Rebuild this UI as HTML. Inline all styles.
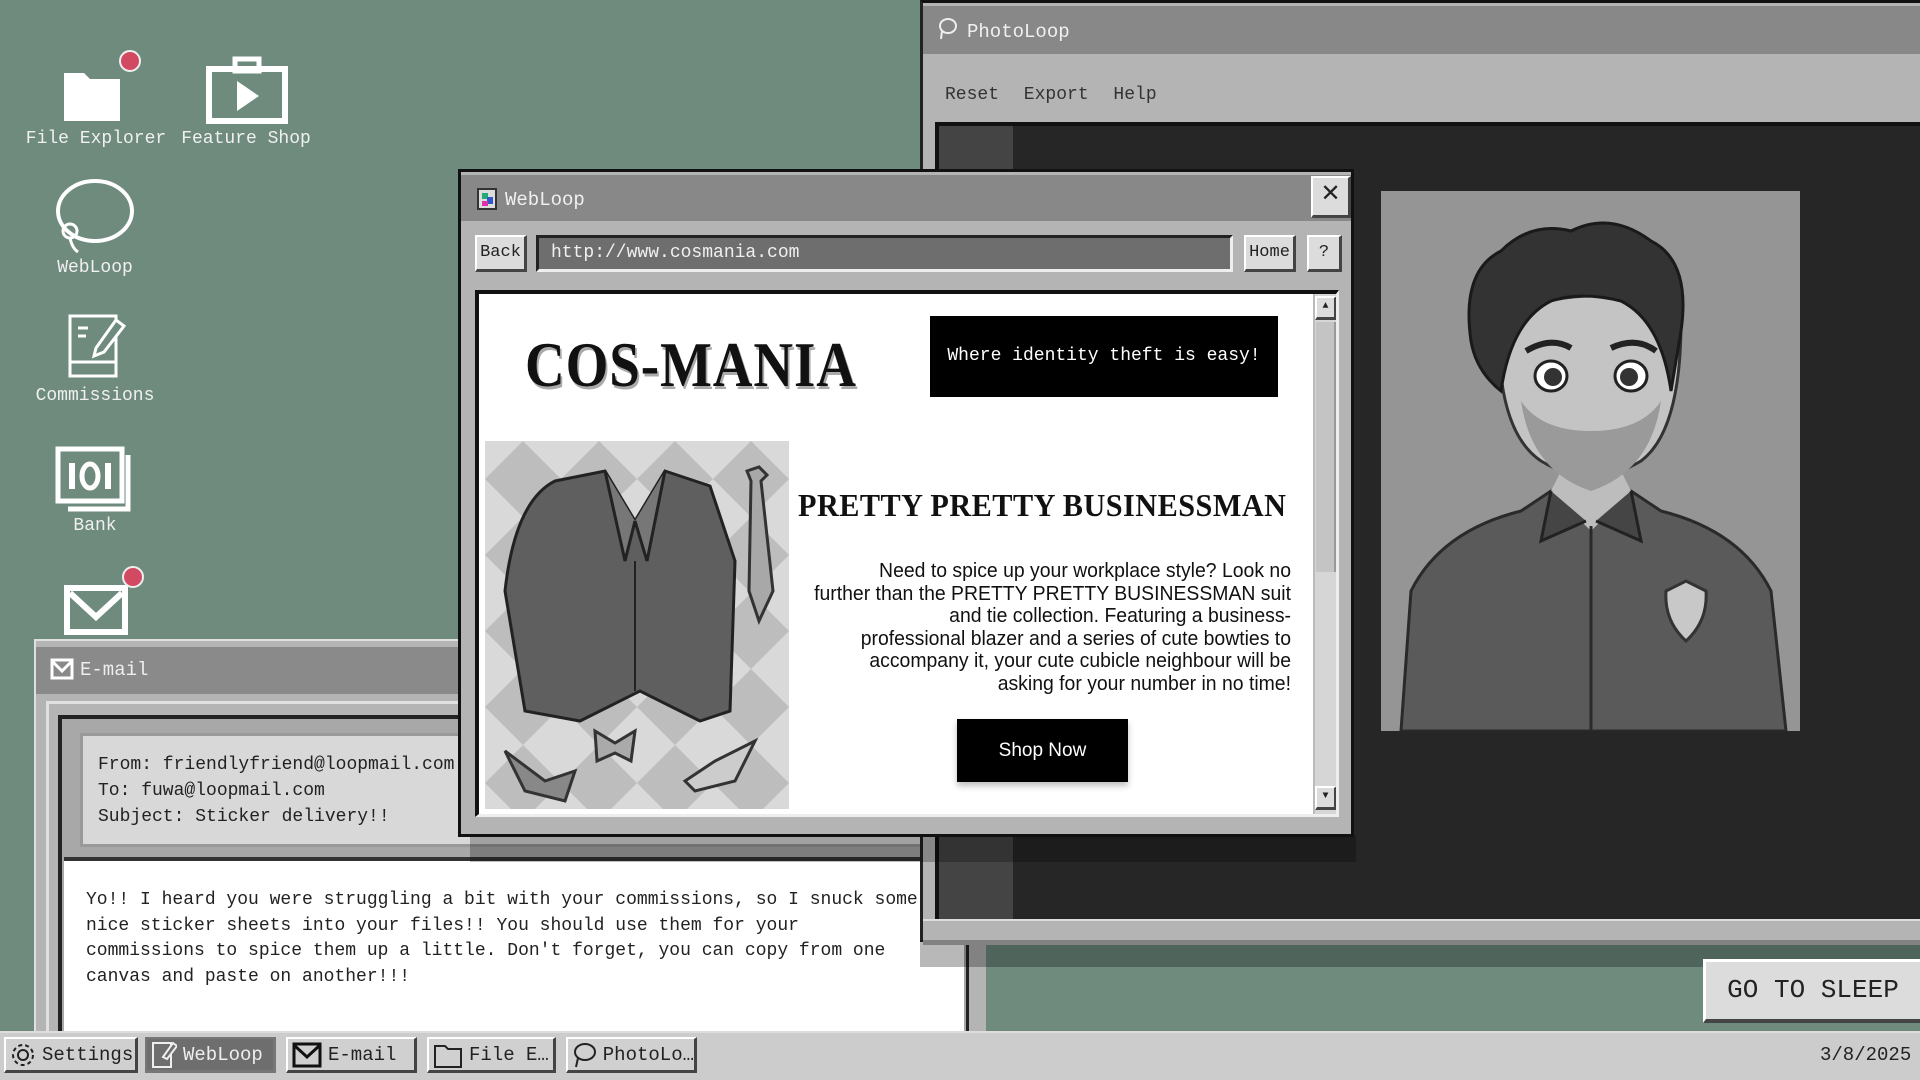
<!DOCTYPE html>
<html><head><meta charset="utf-8"><style>
*{margin:0;padding:0;box-sizing:border-box}
body{width:1920px;height:1080px;overflow:hidden;background:#6e8b7e;position:relative;font-family:"Liberation Mono",monospace;}
.a{position:absolute}
.lbl{position:absolute;color:#f0f0f0;font-size:18px;text-align:center;width:170px;}
.btn{position:absolute;background:#dcdcdc;border-top:2px solid #fff;border-left:2px solid #fff;border-right:3px solid #444;border-bottom:3px solid #444;font-size:17px;color:#222;text-align:center}
.tb{position:absolute;top:1037px;height:36px;background:#d0d0d0;border-top:2px solid #fff;border-left:2px solid #fff;border-right:3px solid #444;border-bottom:3px solid #444;font-size:19px;color:#222;display:flex;align-items:center;gap:6px;padding-left:4px}
.dot{position:absolute;width:22px;height:22px;border-radius:50%;background:#d24a62;border:2px solid #eee}
</style></head><body>

<!-- desktop icons -->
<svg class="a" style="left:60px;top:55px" width="90" height="70"><path d="M4 18 h20 l6 6 h30 v42 h-56z" fill="#fff"/></svg>
<div class="dot" style="left:119px;top:50px"></div>
<div class="lbl" style="left:11px;top:129px">File Explorer</div>
<svg class="a" style="left:205px;top:55px" width="85" height="70"><rect x="4" y="14" width="76" height="52" fill="none" stroke="#fff" stroke-width="6"/><rect x="30" y="4" width="24" height="12" fill="none" stroke="#fff" stroke-width="5"/><path d="M32 26 v30 l22 -15z" fill="#fff"/></svg>
<div class="lbl" style="left:161px;top:129px">Feature Shop</div>
<svg class="a" style="left:52px;top:175px" width="90" height="80"><ellipse cx="43" cy="36" rx="37" ry="30" fill="none" stroke="#fff" stroke-width="4"/><circle cx="18" cy="56" r="7" fill="none" stroke="#fff" stroke-width="3"/><path d="M18 63 q2 10 8 14" stroke="#fff" stroke-width="3" fill="none"/></svg>
<div class="lbl" style="left:10px;top:258px">WebLoop</div>
<svg class="a" style="left:66px;top:312px" width="60" height="70"><rect x="4" y="4" width="46" height="60" fill="none" stroke="#fff" stroke-width="3"/><path d="M4 50 h46" stroke="#fff" stroke-width="3"/><path d="M12 16 h10 M12 24 h8" stroke="#fff" stroke-width="3"/><path d="M30 36 l20 -28 l8 6 l-20 26 l-10 4z" fill="#6e8b7e" stroke="#fff" stroke-width="3"/></svg>
<div class="lbl" style="left:10px;top:386px">Commissions</div>
<svg class="a" style="left:54px;top:445px" width="85" height="70"><rect x="4" y="4" width="64" height="52" fill="none" stroke="#fff" stroke-width="5"/><path d="M74 10 v54 h-60" fill="none" stroke="#fff" stroke-width="5"/><rect x="15" y="18" width="6" height="26" fill="#fff"/><rect x="51" y="18" width="6" height="26" fill="#fff"/><ellipse cx="36" cy="31" rx="8" ry="12" fill="none" stroke="#fff" stroke-width="5"/></svg>
<div class="lbl" style="left:10px;top:516px">Bank</div>
<svg class="a" style="left:64px;top:585px" width="70" height="50"><rect x="3" y="3" width="58" height="44" fill="none" stroke="#fff" stroke-width="6"/><path d="M6 8 l26 24 l26 -24" fill="none" stroke="#fff" stroke-width="6"/></svg>
<div class="dot" style="left:122px;top:566px"></div>

<!-- Email window -->
<div class="a" style="left:34px;top:639px;width:952px;height:400px;background:#b4b4b4;border:2px solid #e0e0e0">
 <div class="a" style="left:0;top:6px;width:948px;height:47px;background:#8a8a8a"></div>
 <svg class="a" style="left:14px;top:17px" width="26" height="24"><rect x="2" y="2" width="20" height="18" fill="none" stroke="#fff" stroke-width="3"/><path d="M3 4 l9 9 l9 -9" stroke="#fff" stroke-width="3" fill="none"/></svg>
 <div class="a" style="left:44px;top:18px;color:#eee;font-size:19px">E-mail</div>
 <div class="a" style="left:10px;top:60px;width:930px;height:340px;border:3px solid #e0e0e0;background:#b4b4b4"></div>
 <div class="a" style="left:22px;top:74px;width:912px;height:330px;border-top:4px solid #222;border-left:4px solid #222;background:#a8a8a8"></div>
 <div class="a" style="left:44px;top:92px;width:900px;height:114px;background:#d8d8d8;border:3px solid #999"></div>
 <div class="a" style="left:62px;top:111px;font-size:18px;line-height:26px;color:#222">From: friendlyfriend@loopmail.com<br>To: fuwa@loopmail.com<br>Subject: Sticker delivery!!</div>
 <div class="a" style="left:28px;top:216px;width:900px;height:190px;background:#fff;border-top:4px solid #333"></div>
 <div class="a" style="left:50px;top:247px;font-size:18px;line-height:25.5px;color:#222;white-space:pre">Yo!! I heard you were struggling a bit with your commissions, so I snuck some
nice sticker sheets into your files!! You should use them for your
commissions to spice them up a little. Don't forget, you can copy from one
canvas and paste on another!!!</div>
 <div class="a" style="left:930px;top:216px;width:20px;height:190px;background:#b4b4b4;border-left:3px solid #222"></div>
</div>

<!-- PhotoLoop window -->
<div class="a" style="left:920px;top:0px;width:1010px;height:942px;background:#b4b4b4;border:3px solid #222;border-right:none;border-top:3px solid #111">
 <div class="a" style="left:0;top:3px;width:1010px;height:48px;background:#888"></div>
 <svg class="a" style="left:14px;top:14px" width="22" height="24"><ellipse cx="11" cy="9" rx="8" ry="7" fill="none" stroke="#eee" stroke-width="2"/><path d="M5 14 l-1 8" stroke="#eee" stroke-width="2"/></svg>
 <div class="a" style="left:44px;top:18px;color:#f0f0f0;font-size:19px">PhotoLoop</div>
 <div class="a" style="left:22px;top:82px;color:#333;font-size:18px;word-spacing:14px">Reset Export Help</div>
 <div class="a" style="left:12px;top:119px;width:1000px;height:797px;background:#262626;border-top:4px solid #111;border-left:4px solid #111"></div>
 <div class="a" style="left:16px;top:123px;width:74px;height:793px;background:#444"></div>
 <div class="a" style="left:0;top:916px;width:1010px;height:26px;background:#b4b4b4;border-top:2px solid #ddd"></div>
</div>
<div class="a" style="left:920px;top:940px;width:1000px;height:27px;background:rgba(0,0,0,0.28)"></div>

<!-- portrait -->
<svg class="a" style="left:1381px;top:191px" width="419" height="540" viewBox="0 0 419 540">
 <rect width="419" height="540" fill="#959595"/>
 <path d="M20 540 L30 400 Q60 340 140 320 L170 300 L250 300 L280 320 Q360 340 390 400 L405 540z" fill="#5a5a5a" stroke="#2a2a2a" stroke-width="3"/>
 <path d="M170 300 L210 340 L250 300 L240 280 L180 280z" fill="#bdbdbd"/>
 <path d="M170 300 L160 350 L205 330 M250 300 L260 350 L215 330" fill="#454545" stroke="#222" stroke-width="3"/>
 <path d="M210 335 V540" stroke="#2a2a2a" stroke-width="3"/>
 <path d="M285 400 l20 -10 l20 10 q2 30 -20 50 q-22 -20 -20 -50z" fill="#c8c8c8" stroke="#333" stroke-width="3"/>
 <path d="M118 130 Q115 240 160 270 Q210 300 260 270 Q300 240 300 130 Q210 80 118 130z" fill="#c4c4c4" stroke="#333" stroke-width="3"/>
 <path d="M140 210 Q150 280 210 300 Q270 280 280 210 Q260 240 210 240 Q160 240 140 210z" fill="#9a9a9a"/>
 <path d="M90 150 Q80 80 120 60 Q150 30 190 40 Q230 20 270 50 Q310 70 300 140 L290 200 Q280 130 240 110 Q200 100 170 110 Q130 130 120 200 Q95 180 90 150z" fill="#333" stroke="#1a1a1a" stroke-width="3"/>
 <ellipse cx="170" cy="185" rx="16" ry="15" fill="#fff" stroke="#222" stroke-width="3"/><circle cx="172" cy="186" r="9" fill="#333"/>
 <ellipse cx="250" cy="185" rx="16" ry="15" fill="#fff" stroke="#222" stroke-width="3"/><circle cx="248" cy="186" r="9" fill="#333"/>
 <path d="M145 160 q25 -15 45 -3 M230 157 q25 -12 45 3" stroke="#222" stroke-width="6" fill="none"/>
</svg>

<!-- WebLoop window shadow -->
<div class="a" style="left:470px;top:836px;width:886px;height:26px;background:rgba(0,0,0,0.25)"></div>
<!-- WebLoop window -->
<div class="a" style="left:458px;top:169px;width:896px;height:668px;background:#b4b4b4;border:3px solid #111;border-top:3px solid #111">
 <div class="a" style="left:0;top:3px;width:890px;height:46px;background:#888"></div>
 <svg class="a" style="left:16px;top:16px" width="22" height="24"><rect x="1" y="1" width="18" height="20" fill="#ddd" stroke="#333" stroke-width="2"/><rect x="5" y="5" width="6" height="6" fill="#2a7"/><rect x="10" y="9" width="6" height="7" fill="#35c"/><rect x="5" y="13" width="6" height="5" fill="#d3a"/></svg>
 <div class="a" style="left:44px;top:17px;color:#f0f0f0;font-size:19px">WebLoop</div>
 <div class="btn" style="left:850px;top:4px;width:40px;height:42px;font-size:24px;line-height:36px;">✕</div>
 <div class="btn" style="left:14px;top:63px;width:52px;height:37px;line-height:31px;">Back</div>
 <div class="a" style="left:75px;top:63px;width:697px;height:37px;background:#6e6e6e;border-top:3px solid #222;border-left:3px solid #222;border-right:3px solid #eee;border-bottom:3px solid #eee;color:#f0f0f0;font-size:18px;line-height:31px;padding-left:12px">http://www.cosmania.com</div>
 <div class="btn" style="left:783px;top:63px;width:52px;height:37px;line-height:31px;">Home</div>
 <div class="btn" style="left:846px;top:63px;width:35px;height:37px;line-height:31px;">?</div>
 <div class="a" style="left:14px;top:118px;width:864px;height:527px;background:#fff;border-top:4px solid #111;border-left:4px solid #111;border-right:3px solid #eee;border-bottom:3px solid #eee;overflow:hidden">
  <div class="a" style="left:46px;top:34px;font-family:'Liberation Serif',serif;font-weight:bold;font-size:64px;letter-spacing:1px;color:#111;transform:scaleX(0.86);transform-origin:left;text-shadow:2px 3px 0 #aaa;white-space:nowrap">COS-MANIA</div>
  <div class="a" style="left:451px;top:22px;width:348px;height:81px;background:#000;color:#fff;font-size:18px;line-height:81px;text-align:center">Where identity theft is easy!</div>
  <svg class="a" style="left:6px;top:147px" width="304" height="368">
   <defs><pattern id="ar" width="76" height="76" patternUnits="userSpaceOnUse"><rect width="76" height="76" fill="#d9d9d9"/><path d="M38 0 L76 38 L38 76 L0 38z" fill="#bdbdbd"/></pattern></defs>
   <rect width="304" height="368" fill="url(#ar)"/>
   <path d="M70 40 L120 30 L150 80 L180 30 L225 45 L250 120 L245 270 L215 280 L155 250 L95 280 L40 270 L20 150 Q30 60 70 40z" fill="#5f5f5f" stroke="#222" stroke-width="3"/>
   <path d="M120 30 L140 120 L150 80 M180 30 L162 120 L150 80" fill="#777" stroke="#222" stroke-width="3"/>
   <path d="M150 120 V250" stroke="#222" stroke-width="2"/>
   <path d="M262 30 l12 -4 l8 8 l-6 6 l12 110 l-14 30 l-10 -30 l2 -110z" fill="#a8a8a8" stroke="#333" stroke-width="3"/>
   <path d="M110 290 l20 12 l20 -12 l-4 30 l-16 -8 l-18 8z" fill="#aaa" stroke="#333" stroke-width="3"/>
   <path d="M20 310 l40 30 l30 -10 l-10 30 l-40 -10z" fill="#888" stroke="#333" stroke-width="3"/>
   <path d="M200 340 l30 -20 l40 -20 l-20 40 l-40 10z" fill="#ccc" stroke="#333" stroke-width="3"/>
  </svg>
  <div class="a" style="left:319px;top:193px;font-family:'Liberation Serif',serif;font-weight:bold;font-size:32px;letter-spacing:0.5px;color:#111;white-space:nowrap;transform:scaleX(0.945);transform-origin:left">PRETTY PRETTY BUSINESSMAN</div>
  <div class="a" style="right:45px;top:266px;width:600px;text-align:right;font-family:'Liberation Sans',sans-serif;font-size:20px;line-height:22.6px;color:#111;white-space:nowrap;transform:scaleX(0.97);transform-origin:right">Need to spice up your workplace style? Look no<br>further than the PRETTY PRETTY BUSINESSMAN suit<br>and tie collection. Featuring a business-<br>professional blazer and a series of cute bowties to<br>accompany it, your cute cubicle neighbour will be<br>asking for your number in no time!</div>
  <div class="a" style="left:478px;top:425px;width:171px;height:63px;background:#000;color:#fff;font-family:'Liberation Sans',sans-serif;font-size:19px;line-height:63px;text-align:center;box-shadow:0 4px 6px rgba(0,0,0,.25)">Shop Now</div>
  <div class="a" style="left:834px;top:0;width:26px;height:524px;background:#d6d6d6;border-left:2px solid #bbb"></div>
  <div class="btn" style="left:836px;top:2px;width:22px;height:24px;font-size:10px;line-height:18px;padding:0">▲</div>
  <div class="a" style="left:837px;top:28px;width:20px;height:250px;background:#c4c4c4;border-right:2px solid #999"></div>
  <div class="btn" style="left:836px;top:492px;width:22px;height:24px;font-size:10px;line-height:18px;padding:0">▼</div>
 </div>
</div>

<!-- Go to sleep -->
<div class="a" style="left:1703px;top:959px;width:217px;height:64px;background:#dcdcdc;border-top:3px solid #fff;border-left:3px solid #fff;border-bottom:4px solid #444;font-size:26px;line-height:56px;text-align:center;color:#222">GO TO SLEEP</div>

<!-- taskbar -->
<div class="a" style="left:0;top:1031px;width:1920px;height:49px;background:#cccccc;border-top:2px solid #ddd"></div>
<div class="tb" style="left:4px;width:134px">
 <svg width="26" height="26"><circle cx="13" cy="13" r="5" fill="none" stroke="#222" stroke-width="2"/><circle cx="13" cy="13" r="10" fill="none" stroke="#222" stroke-width="2" stroke-dasharray="4 3"/></svg>Settings</div>
<div class="tb" style="left:145px;width:131px;background:#6e6e6e;color:#eee;border-color:#777">
 <svg width="26" height="28"><rect x="2" y="2" width="18" height="24" fill="none" stroke="#eee" stroke-width="2"/><path d="M12 16 l10 -14 l4 3 l-10 13z" fill="#6e6e6e" stroke="#eee" stroke-width="2"/></svg>WebLoop</div>
<div class="tb" style="left:286px;width:131px">
 <svg width="30" height="26"><rect x="2" y="2" width="26" height="22" fill="none" stroke="#111" stroke-width="3"/><path d="M3 4 l12 11 l12 -11" stroke="#111" stroke-width="3" fill="none"/></svg>E-mail</div>
<div class="tb" style="left:427px;width:129px">
 <svg width="30" height="28"><path d="M2 5 h10 l3 3 h13 v18 h-26z" fill="none" stroke="#222" stroke-width="2"/></svg>File E…</div>
<div class="tb" style="left:566px;width:131px">
 <svg width="26" height="28"><ellipse cx="13" cy="11" rx="10" ry="8" fill="none" stroke="#222" stroke-width="2"/><path d="M6 17 l-2 9" stroke="#222" stroke-width="2"/></svg>PhotoLo…</div>
<div class="a" style="left:1820px;top:1044px;font-size:19px;color:#222">3/8/2025</div>
</body></html>
